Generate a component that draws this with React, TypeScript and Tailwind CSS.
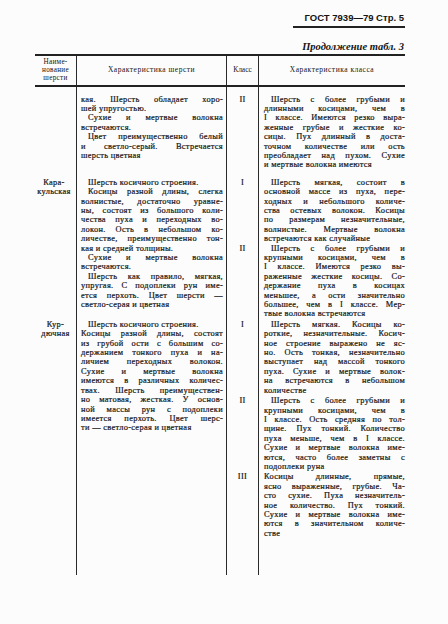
type P = { lines: string[]; indent?: boolean }

const firstLeft: P[] = [
  { indent: false, lines: ["кая. Шерсть обладает хоро-", "шей упругостью."] },
  { lines: ["Сухие и мертвые волокна", "встречаются."] },
  { lines: ["Цвет преимущественно белый", "и светло-серый. Встречается", "шерсть цветная"] },
]

const firstRight: P[] = [
  {
    lines: [
      "Шерсть с более грубыми и",
      "длинными косицами, чем в",
      "I классе. Имеются резко выра-",
      "женные грубые и жесткие ко-",
      "сицы. Пух длинный в доста-",
      "точном количестве или ость",
      "преобладает над пухом. Сухие",
      "и мертвые волокна имеются",
    ],
  },
]

const karakulLeft: P[] = [
  { lines: ["Шерсть косичного строения."] },
  {
    lines: [
      "Косицы разной длины, слегка",
      "волнистые, достаточно уравне-",
      "ны, состоят из большого коли-",
      "чества пуха и переходных во-",
      "локон. Ость в небольшом ко-",
      "личестве, преимущественно тон-",
      "кая и средней толщины.",
    ],
  },
  { lines: ["Сухие и мертвые волокна", "встречаются."] },
  {
    lines: [
      "Шерсть как правило, мягкая,",
      "упругая. С подоплеки рун име-",
      "ется перхоть. Цвет шерсти —",
      "светло-серая и цветная",
    ],
  },
]

const kurdLeft: P[] = [
  { lines: ["Шерсть косичного строения."] },
  {
    indent: false,
    lines: [
      "Косицы разной длины, состоят",
      "из грубой ости с большим со-",
      "держанием тонкого пуха и на-",
      "личием переходных волокон.",
      "Сухие и мертвые волокна",
      "имеются в различных количес-",
      "твах. Шерсть преимуществен-",
      "но матовая, жесткая. У основ-",
      "ной массы рун с подоплеки",
      "имеется перхоть. Цвет шерс-",
      "ти — светло-серая и цветная",
    ],
  },
]

const classes = [
  {
    mark: "I",
    pad: "pb-0",
    lines: [
      "Шерсть мягкая, состоит в",
      "основной массе из пуха, пере-",
      "ходных и небольшого количе-",
      "ства остевых волокон. Косицы",
      "по размерам незначительные,",
      "волнистые. Мертвые волокна",
      "встречаются как случайные",
    ],
  },
  {
    mark: "II",
    pad: "pb-[1px]",
    lines: [
      "Шерсть с более грубыми и",
      "крупными косицами, чем в",
      "I классе. Имеются резко вы-",
      "раженные жесткие косицы. Со-",
      "держание пуха в косицах",
      "меньшее, а ости значительно",
      "большее, чем в I классе. Мер-",
      "твые волокна встречаются",
    ],
  },
  {
    mark: "I",
    pad: "pb-[1px]",
    lines: [
      "Шерсть мягкая. Косицы ко-",
      "роткие, незначительные. Косич-",
      "ное строение выражено не яс-",
      "но. Ость тонкая, незначительно",
      "выступает над массой тонкого",
      "пуха. Сухие и мертвые волок-",
      "на встречаются в небольшом",
      "количестве",
    ],
  },
  {
    mark: "II",
    pad: "pb-[1px]",
    lines: [
      "Шерсть с более грубыми и",
      "крупными косицами, чем в",
      "I классе. Ость средняя по тол-",
      "щине. Пух тонкий. Количество",
      "пуха меньше, чем в I классе.",
      "Сухие и мертвые волокна име-",
      "ются, часто более заметны с",
      "подоплеки руна",
    ],
  },
  {
    mark: "III",
    pad: "pb-0",
    lines: [
      "Косицы длинные, прямые,",
      "ясно выраженные, грубые. Ча-",
      "сто сухие. Пуха незначитель-",
      "ное количество. Пух тонкий.",
      "Сухие и мертвые волокна име-",
      "ются в значительном количе-",
      "стве",
    ],
  },
]

function Para({ lines, indent = true }: P) {
  return (
    <div>
      {lines.map((l, i) => (
        <div
          key={i}
          className={`${i === 0 && indent ? "pl-[7px]" : ""} ${
            i < lines.length - 1 ? "text-justify [text-align-last:justify]" : ""
          }`}
        >
          {l}
        </div>
      ))}
    </div>
  )
}

const colText = "border-l border-[#2a2a2a] pl-[4px] pr-[3px]"
const colClass = "border-l border-[#2a2a2a] text-center"
const colDesc = "border-l border-[#2a2a2a] pl-[5px]"

export default function App() {
  return (
    <div className="min-h-[624px] w-[448px] bg-[#fcfcfc] font-['Liberation_Serif',serif] text-[#141414]">
      {/* page header */}
      <div className="flex flex-col items-end pr-[43px] pt-[12px]">
        <div className="pr-[1px] font-['Liberation_Sans',sans-serif] text-[9.5px] leading-[12px] font-bold">
          ГОСТ 7939—79 Стр. 5
        </div>
        <div className="mt-[2px] h-[1.5px] w-[112px] bg-[#222]" />
        <div className="mt-[13px] pr-[1px] text-[10.5px] leading-[12px] font-bold italic">
          Продолжение табл. 3
        </div>
      </div>

      <div className="mt-[1px] ml-[35px] w-[370px] border-t-2 border-[#222]">
        {/* column heads */}
        <div className="grid h-[31px] grid-cols-[41px_150px_32px_147px] border-b-2 border-[#222] text-[7.5px] tracking-[0.5px]">
          <div className="flex flex-col items-center justify-center text-[7.2px] leading-[8.1px] tracking-[0.3px]">
            <span>Наиме-</span>
            <span>нование</span>
            <span>шерсти</span>
          </div>
          <div className="flex items-center justify-center border-l border-[#2a2a2a]">Характеристика шерсти</div>
          <div className="flex items-center justify-center border-l border-[#2a2a2a] tracking-normal">Класс</div>
          <div className="flex items-center justify-center border-l border-[#2a2a2a]">Характеристика класса</div>
        </div>

        {/* body */}
        <div className="grid h-[488px] grid-cols-[41px_150px_32px_147px] grid-rows-[auto_auto_auto_auto_auto_auto_1fr] text-[8.4px] leading-[9.4px] tracking-[0.3px] [-webkit-text-stroke:0.2px_#141414]">
          {/* continued row */}
          <div className="pt-[8px]" />
          <div className={`${colText} pt-[8px] pb-[8px]`}>
            {firstLeft.map((p, i) => (
              <Para key={i} {...p} />
            ))}
          </div>
          <div className={`${colClass} pt-[8px]`}>II</div>
          <div className={`${colDesc} pt-[8px] pb-[8px]`}>
            {firstRight.map((p, i) => (
              <Para key={i} {...p} />
            ))}
          </div>

          {/* Каракульская */}
          <div className="row-span-2 -ml-[3px] text-center">
            <div>Кара-</div>
            <div>кульская</div>
          </div>
          <div className={`${colText} row-span-2`}>
            {karakulLeft.map((p, i) => (
              <Para key={i} {...p} />
            ))}
          </div>
          {classes.slice(0, 2).map((c, i) => (
            <ClassCells key={i} mark={c.mark} lines={c.lines} pad={c.pad} />
          ))}

          {/* Курдючная */}
          <div className="row-span-3 text-center">
            <div>Кур-</div>
            <div>дючная</div>
          </div>
          <div className={`${colText} row-span-3`}>
            {kurdLeft.map((p, i) => (
              <Para key={i} {...p} />
            ))}
          </div>
          {classes.slice(2).map((c, i) => (
            <ClassCells key={i} mark={c.mark} lines={c.lines} pad={c.pad} />
          ))}

          {/* rules run on below the text */}
          <div />
          <div className="border-l border-[#2a2a2a]" />
          <div className="border-l border-[#2a2a2a]" />
          <div className="border-l border-[#2a2a2a]" />
        </div>
      </div>
    </div>
  )
}

function ClassCells({ mark, lines, pad }: { mark: string; lines: string[]; pad: string }) {
  return (
    <>
      <div className={`${colClass} col-start-3 ${pad}`}>{mark}</div>
      <div className={`${colDesc} ${pad}`}>
        <Para lines={lines} indent={mark !== "III"} />
      </div>
    </>
  )
}
